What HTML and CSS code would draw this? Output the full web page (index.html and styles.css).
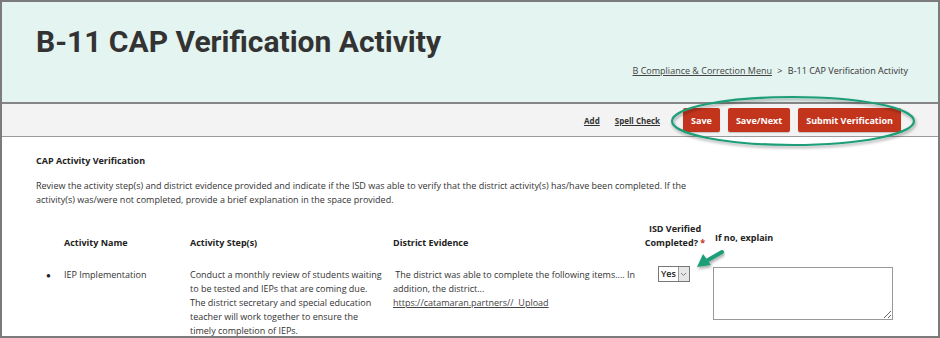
FILE: index.html
```html
<!DOCTYPE html>
<html lang="en">
<head>
    <meta charset="UTF-8">
    <title>B-11 CAP Verification Activity</title>
    <link rel="stylesheet" href="styles.css">
</head>
<body>
    <div class="frame">
        <div class="header">
            <h1>B-11 CAP Verification Activity</h1>
            <div class="crumbs">
                <a href="#">B Compliance &amp; Correction Menu</a>
                <span class="sep">&gt;</span>
                <span>B-11 CAP Verification Activity</span>
            </div>
        </div>

        <div class="toolbar">
            <a href="#" class="tool-link">Add</a>
            <a href="#" class="tool-link">Spell Check</a>
            <button class="btn">Save</button>
            <button class="btn">Save/Next</button>
            <button class="btn">Submit Verification</button>
        </div>

        <div class="content">
            <h3>CAP Activity Verification</h3>
            <p class="intro">Review the activity step(s) and district evidence provided and indicate if the ISD was able to verify that the district activity(s) has/have been completed. If the activity(s) was/were not completed, provide a brief explanation in the space provided.</p>

            <div class="grid">
                <div></div>
                <div class="th">Activity Name</div>
                <div class="th">Activity Step(s)</div>
                <div class="th">District Evidence</div>
                <div class="th th-verify">ISD Verified<br>Completed? <span class="req">*</span></div>
                <div class="th th-explain">If no, explain</div>

                <div class="bullet">&#9679;</div>
                <div class="td">IEP Implementation</div>
                <div class="td">Conduct a monthly review of students waiting to be tested and IEPs that are coming due. The district secretary and special education teacher will work together to ensure the timely completion of IEPs.</div>
                <div class="td evidence">&nbsp;The district was able to complete the following items.... In addition, the district...<br><a href="#">https://catamaran.partners//&nbsp; Upload</a></div>
                <div class="td">
                    <span class="select">
                        <span class="select-val">Yes</span>
                        <span class="select-btn">
                            <svg width="7" height="5" viewBox="0 0 7 5"><path d="M1 1 L3.5 3.5 L6 1" fill="none" stroke="#777" stroke-width="0.9"/></svg>
                        </span>
                    </span>
                </div>
                <div class="td">
                    <textarea class="explain"></textarea>
                </div>
            </div>
        </div>

        <!-- callouts drawn over the screenshot -->
        <svg class="callout" width="940" height="338" viewBox="0 0 940 338">
            <defs>
                <filter id="sh" x="-10%" y="-30%" width="120%" height="160%">
                    <feDropShadow dx="1" dy="2" stdDeviation="1.5" flood-color="#000" flood-opacity="0.35"/>
                </filter>
            </defs>
            <ellipse cx="793" cy="121" rx="121" ry="24" fill="none" stroke="#1f9e78" stroke-width="2.2" filter="url(#sh)"/>
            <g filter="url(#sh)">
                <line x1="722" y1="252" x2="708" y2="260" stroke="#1f9e78" stroke-width="4" stroke-linecap="round"/>
                <polygon points="697,267 703,254 711,265" fill="#1f9e78"/>
            </g>
        </svg>
    </div>
</body>
</html>
```

FILE: styles.css
```css
body {
    margin: 0;
    padding: 0;
    background: #fff;
    font-family: "Open Sans", Arial, sans-serif;
    color: #333;
}
.frame {
    position: relative;
    width: 940px;
    height: 338px;
    box-sizing: border-box;
    border: 2px solid #7b7b7b;
    overflow: hidden;
}
.header {
    background-color: #e4f4f0;
    height: 100px;
    border-bottom: 2px solid #858585;
    padding: 0 30px 0 34px;
}
h1 {
    margin: 0;
    padding-top: 22px;
    font-family: Roboto, Arial, sans-serif;
    font-weight: bold;
    font-size: 30px;
    line-height: 36px;
    color: #333;
}
.crumbs {
    text-align: right;
    font-size: 9px;
    margin-top: 4px;
    color: #333;
}
.crumbs a {
    color: #444;
}
.crumbs .sep {
    margin: 0 3px;
}
.toolbar {
    height: 32px;
    background-color: #f3f3f3;
    border-bottom: 1px solid #9a9a9a;
    display: flex;
    justify-content: flex-end;
    align-items: center;
    padding-right: 37px;
}
.tool-link {
    font-size: 8px;
    font-weight: bold;
    color: #333;
    margin-right: 15px;
}
.tool-link + .btn {
    margin-left: 8px;
}
.btn {
    background-color: #c3341d;
    color: #fff;
    border: none;
    border-radius: 2px;
    font-family: "Open Sans", Arial, sans-serif;
    font-weight: bold;
    font-size: 9px;
    height: 24px;
    padding: 0 8px;
    margin-left: 8px;
    box-shadow: 0 1px 1px rgba(0, 0, 0, 0.2);
}
.content {
    padding: 17px 20px 0 34px;
    font-size: 9px;
}
h3 {
    margin: 0;
    font-size: 9px;
    font-weight: bold;
    color: #222;
    line-height: 14px;
}
.intro {
    margin: 11px 0 0 0;
    line-height: 14px;
    max-width: 670px;
}
.grid {
    display: grid;
    grid-template-columns: 28px 126px 203px 250px 70px 180px;
    margin-top: 15px;
    line-height: 14px;
}
.th {
    font-weight: bold;
    color: #222;
    align-self: end;
}
.th-verify {
    text-align: center;
    padding-right: 6px;
}
.th-explain {
    align-self: center;
    padding-top: 4px;
    padding-left: 2px;
}
.req {
    color: #c3341d;
}
.bullet {
    padding-top: 18px;
    padding-left: 10px;
    font-size: 8px;
    color: #222;
}
.td {
    padding-top: 18px;
    padding-right: 8px;
}
.evidence a {
    color: #444;
}
.select {
    display: inline-flex;
    margin-left: 15px;
    margin-top: -2px;
    height: 14px;
    border: 1px solid #777;
    background: #fff;
    vertical-align: top;
}
.select-val {
    padding: 0 2px 0 2px;
    font-weight: 600;
    color: #222;
    line-height: 14px;
}
.select-btn {
    width: 10px;
    background: #e6e6e6;
    border-left: 1px solid #999;
    display: flex;
    align-items: center;
    justify-content: center;
}
.explain {
    display: block;
    box-sizing: border-box;
    width: 180px;
    height: 53px;
    margin-top: -1px;
    margin-left: 0;
    border: 1px solid #999;
    resize: both;
}
.callout {
    position: absolute;
    left: -2px;
    top: -2px;
    pointer-events: none;
}
```
